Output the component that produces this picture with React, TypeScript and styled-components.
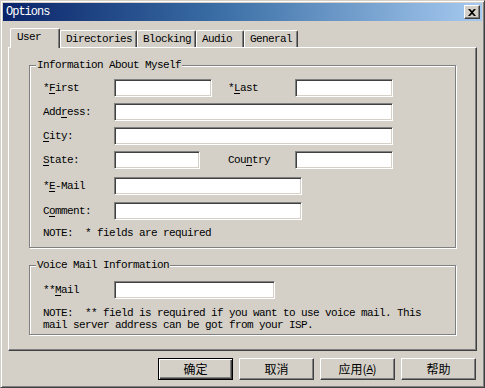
import React from 'react';
import styled, { createGlobalStyle } from 'styled-components';

const mono = `'Liberation Mono', 'DejaVu Sans Mono', monospace`;
const cjk = `'Noto Sans CJK SC', 'Liberation Sans', sans-serif`;

const GlobalStyle = createGlobalStyle`
  html, body {
    margin: 0;
    padding: 0;
    background: #d4d0c8;
  }
  body {
    width: 485px;
    height: 388px;
    overflow: hidden;
  }
`;

const Window = styled.div`
  box-sizing: border-box;
  width: 485px;
  height: 388px;
  background: #d4d0c8;
  border: 1px solid;
  border-color: #d4d0c8 #404040 #404040 #d4d0c8;
  box-shadow: inset 1px 1px 0 #fff, inset -1px -1px 0 #808080;
  padding: 2px;
  display: flex;
  flex-direction: column;
  font-family: ${mono};
  font-size: 11px;
  letter-spacing: -0.6px;
  line-height: 12px;
  color: #000;
`;

const TitleBar = styled.div`
  height: 18px;
  flex: none;
  display: flex;
  align-items: center;
  justify-content: space-between;
  padding: 0 2px;
  background: linear-gradient(to right, #0a246a 0%, #3a6ea5 45%, #a6caf0 100%);
`;

const Title = styled.span`
  color: #fff;
  font-size: 12px;
  letter-spacing: -1px;
  margin-left: 1px;
`;

const CloseBox = styled.div`
  box-sizing: border-box;
  width: 16px;
  height: 14px;
  background: #d4d0c8;
  border: 1px solid;
  border-color: #fff #404040 #404040 #fff;
  box-shadow: inset -1px -1px 0 #808080;
  display: flex;
  align-items: center;
  justify-content: center;
`;

const Body = styled.div`
  flex: 1;
  padding: 7px 5px 0 5px;
  display: flex;
  flex-direction: column;
`;

const TabStrip = styled.div`
  display: flex;
  align-items: flex-end;
  height: 19px;
  padding-left: 2px;
  position: relative;
  z-index: 2;
`;

const Tab = styled.div<{ $w: number; $active?: boolean }>`
  box-sizing: border-box;
  width: ${(p) => p.$w}px;
  height: ${(p) => (p.$active ? 20 : 17)}px;
  margin-bottom: ${(p) => (p.$active ? -1 : 0)}px;
  padding-left: ${(p) => (p.$active ? 6 : 5)}px;
  padding-bottom: ${(p) => (p.$active ? 3 : 0)}px;
  display: flex;
  align-items: center;
  background: #d4d0c8;
  border-top: 1px solid #fff;
  border-left: 1px solid #fff;
  border-right: 1px solid #404040;
  border-radius: 2px 2px 0 0;
  box-shadow: inset -1px 0 0 #808080;
`;

const Panel = styled.div`
  box-sizing: border-box;
  height: 304px;
  border: 1px solid;
  border-color: #fff #404040 #404040 #fff;
  box-shadow: inset -1px -1px 0 #808080;
  padding: 11px 20px 0 20px;
  display: flex;
  flex-direction: column;
`;

const Group = styled.fieldset<{ $mt?: number }>`
  margin: ${(p) => p.$mt ?? 0}px 0 0 0;
  padding: 0;
  min-width: 0;
  border: 1px solid #808080;
  box-shadow: inset 1px 1px 0 #fff, 1px 1px 0 #fff;
`;

const Legend = styled.legend`
  margin-left: 6px;
  padding: 0 1px;
  line-height: 12px;
  background: #d4d0c8;
`;

const GroupInner = styled.div<{ $pt: number; $pb: number }>`
  padding: ${(p) => p.$pt}px 0 ${(p) => p.$pb}px 13px;
  display: flex;
  flex-direction: column;
`;

const Row = styled.div<{ $mt?: number }>`
  display: grid;
  grid-template-columns: 71px 114px 67px 1fr;
  align-items: center;
  height: 18px;
  margin-top: ${(p) => p.$mt ?? 0}px;
`;

const Label = styled.span`
  white-space: pre;
  u {
    text-underline-offset: 2px;
  }
`;

const Field = styled.div<{ $w: number; $span?: boolean }>`
  box-sizing: border-box;
  width: ${(p) => p.$w}px;
  height: 18px;
  grid-column: ${(p) => (p.$span ? '2 / 5' : 'auto')};
  background: #fff;
  border: 1px solid;
  border-color: #808080 #fff #fff #808080;
  box-shadow: inset 1px 1px 0 #404040, inset -1px -1px 0 #d4d0c8;
`;

const Note = styled.div<{ $mt: number }>`
  margin-top: ${(p) => p.$mt}px;
  line-height: 12px;
  white-space: pre;
`;

const ButtonRow = styled.div`
  display: flex;
  justify-content: flex-end;
  gap: 6px;
  margin-top: 7px;
  padding-right: 1px;
`;

const Button = styled.div<{ $default?: boolean }>`
  box-sizing: border-box;
  width: 75px;
  height: 22px;
  display: flex;
  align-items: center;
  justify-content: center;
  background: #d4d0c8;
  font-family: ${cjk};
  font-size: 12px;
  letter-spacing: 0;
  border: 1px solid;
  border-color: ${(p) => (p.$default ? '#000' : '#fff #404040 #404040 #fff')};
  box-shadow: ${(p) =>
    p.$default
      ? 'inset 1px 1px 0 #fff, inset -1px -1px 0 #404040, inset -2px -2px 0 #808080'
      : 'inset -1px -1px 0 #808080'};
  u {
    font-family: ${mono};
    font-size: 11px;
    letter-spacing: -0.6px;
    text-underline-offset: 1px;
  }
`;

const tabs = [
  { name: 'User', w: 50 },
  { name: 'Directories', w: 77 },
  { name: 'Blocking', w: 59 },
  { name: 'Audio', w: 48 },
  { name: 'General', w: 54 },
];

const App = () => {
  return (
    <Window>
      <GlobalStyle />
      <TitleBar>
        <Title>Options</Title>
        <CloseBox>
          <svg width="8" height="7" viewBox="0 0 8 7">
            <path d="M0 0h2l2 2 2-2h2L5 3.5 8 7H6L4 5 2 7H0l3-3.5z" fill="#000" />
          </svg>
        </CloseBox>
      </TitleBar>
      <Body>
        <TabStrip>
          {tabs.map((t, i) => (
            <Tab key={t.name} $w={t.w} $active={i === 0}>
              {t.name}
            </Tab>
          ))}
        </TabStrip>
        <Panel>
          <Group>
            <Legend>Information About Myself</Legend>
            <GroupInner $pt={8} $pb={8}>
              <Row>
                <Label>
                  *<u>F</u>irst
                </Label>
                <Field $w={98} />
                <Label>
                  *<u>L</u>ast
                </Label>
                <Field $w={98} />
              </Row>
              <Row $mt={6}>
                <Label>
                  Add<u>r</u>ess:
                </Label>
                <Field $w={279} $span />
              </Row>
              <Row $mt={6}>
                <Label>
                  <u>C</u>ity:
                </Label>
                <Field $w={279} $span />
              </Row>
              <Row $mt={6}>
                <Label>
                  <u>S</u>tate:
                </Label>
                <Field $w={86} />
                <Label>
                  Cou<u>n</u>try
                </Label>
                <Field $w={98} />
              </Row>
              <Row $mt={8}>
                <Label>
                  *<u>E</u>-Mail
                </Label>
                <Field $w={188} $span />
              </Row>
              <Row $mt={7}>
                <Label>
                  C<u>o</u>mment:
                </Label>
                <Field $w={188} $span />
              </Row>
              <Note $mt={7}>NOTE:  * fields are required</Note>
            </GroupInner>
          </Group>
          <Group $mt={11}>
            <Legend>Voice Mail Information</Legend>
            <GroupInner $pt={10} $pb={3}>
              <Row>
                <Label>
                  **<u>M</u>ail
                </Label>
                <Field $w={161} $span />
              </Row>
              <Note $mt={8}>
                {'NOTE:  ** field is required if you want to use voice mail. This\nmail server address can be got from your ISP.'}
              </Note>
            </GroupInner>
          </Group>
        </Panel>
        <ButtonRow>
          <Button $default>确定</Button>
          <Button>取消</Button>
          <Button>
            应用(<u>A</u>)
          </Button>
          <Button>帮助</Button>
        </ButtonRow>
      </Body>
    </Window>
  );
};

export default App;
